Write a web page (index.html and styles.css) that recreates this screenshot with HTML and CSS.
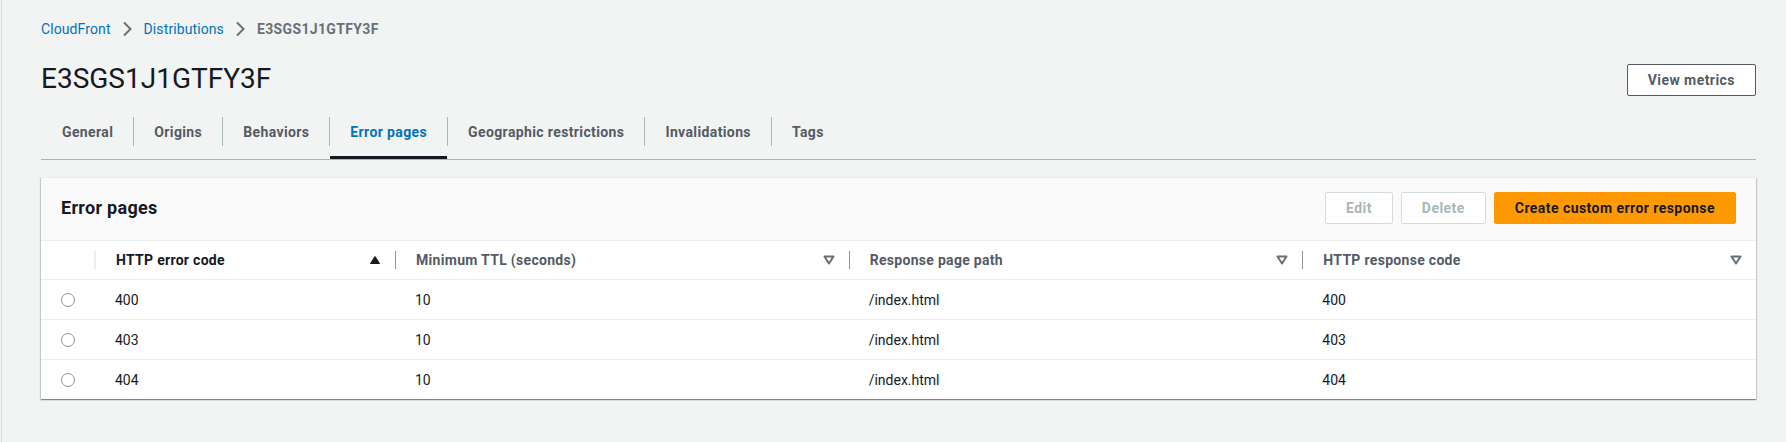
FILE: index.html
```html
<!DOCTYPE html>
<html lang="en">
<head>
<meta charset="utf-8">
<title>E3SGS1J1GTFY3F</title>
<link rel="stylesheet" href="styles.css">
</head>
<body>
<div class="layout">
  <nav class="breadcrumbs">
    <a class="crumb" href="#">CloudFront</a>
    <svg class="chev" viewBox="0 0 16 16" width="16" height="16"><path d="M5 1.5l6.5 6.5-6.5 6.5" fill="none" stroke="#687078" stroke-width="2"/></svg>
    <a class="crumb" href="#">Distributions</a>
    <svg class="chev" viewBox="0 0 16 16" width="16" height="16"><path d="M5 1.5l6.5 6.5-6.5 6.5" fill="none" stroke="#687078" stroke-width="2"/></svg>
    <span class="crumb current">E3SGS1J1GTFY3F</span>
  </nav>

  <header class="page-head">
    <h1 class="title">E3SGS1J1GTFY3F</h1>
    <button class="btn btn-normal">View metrics</button>
  </header>

  <div class="tabs">
    <div class="tab"><span class="tab-label">General</span></div>
    <div class="tab"><span class="tab-label sep">Origins</span></div>
    <div class="tab"><span class="tab-label sep">Behaviors</span></div>
    <div class="tab active"><span class="tab-label sep">Error pages</span></div>
    <div class="tab"><span class="tab-label sep">Geographic restrictions</span></div>
    <div class="tab"><span class="tab-label sep">Invalidations</span></div>
    <div class="tab"><span class="tab-label sep">Tags</span></div>
  </div>

  <section class="panel">
    <div class="panel-head">
      <h2 class="panel-title">Error pages</h2>
      <div class="actions">
        <button class="btn btn-disabled">Edit</button>
        <button class="btn btn-disabled">Delete</button>
        <button class="btn btn-primary">Create custom error response</button>
      </div>
    </div>
    <div class="grid">
      <div class="th th-select"><span class="th-inner light"></span></div>
      <div class="th sorted"><span class="th-inner"><span class="th-text">HTTP error code</span>
        <svg class="sort" viewBox="0 0 12 12" width="12" height="12"><path d="M1.5 9.5L6 2.5l4.5 7z" fill="#16191f" stroke="#16191f" stroke-width="1" stroke-linejoin="round"/></svg></span></div>
      <div class="th"><span class="th-inner dark"><span class="th-text">Minimum TTL (seconds)</span>
        <svg class="sort" viewBox="0 0 12 12" width="12" height="12"><path d="M1.5 2.5h9L6 9.5z" fill="none" stroke="#687078" stroke-width="2" stroke-linejoin="round"/></svg></span></div>
      <div class="th"><span class="th-inner dark"><span class="th-text">Response page path</span>
        <svg class="sort" viewBox="0 0 12 12" width="12" height="12"><path d="M1.5 2.5h9L6 9.5z" fill="none" stroke="#687078" stroke-width="2" stroke-linejoin="round"/></svg></span></div>
      <div class="th"><span class="th-inner dark"><span class="th-text">HTTP response code</span>
        <svg class="sort" viewBox="0 0 12 12" width="12" height="12"><path d="M1.5 2.5h9L6 9.5z" fill="none" stroke="#687078" stroke-width="2" stroke-linejoin="round"/></svg></span></div>

      <div class="td td-select"><span class="radio"></span></div>
      <div class="td">400</div>
      <div class="td">10</div>
      <div class="td">/index.html</div>
      <div class="td">400</div>

      <div class="td td-select line"><span class="radio"></span></div>
      <div class="td line">403</div>
      <div class="td line">10</div>
      <div class="td line">/index.html</div>
      <div class="td line">403</div>

      <div class="td td-select line"><span class="radio"></span></div>
      <div class="td line">404</div>
      <div class="td line">10</div>
      <div class="td line">/index.html</div>
      <div class="td line">404</div>
    </div>
  </section>
</div>
</body>
</html>
```

FILE: styles.css
```css
* { box-sizing: border-box; }

html, body {
  margin: 0;
  padding: 0;
  background: #f2f3f3;
  font-family: Roboto, "Liberation Sans", sans-serif;
  font-size: 14px;
  color: #16191f;
}

.layout {
  margin-left: 1px;
  border-left: 1px solid #d5dbdb;
  min-height: 442px;
  padding: 18px 30px 0 39px;
}

/* breadcrumbs */
.breadcrumbs {
  display: flex;
  align-items: center;
  height: 20px;
  line-height: 20px;
  margin-top: 1px;
}
.crumb {
  color: #0073bb;
  text-decoration: none;
  letter-spacing: 0.1px;
}
.crumb.current {
  color: #687078;
  font-weight: 700;
  letter-spacing: 0.35px;
}
.chev {
  display: block;
  margin: 0 9px 0 8px;
}

/* page header */
.page-head {
  display: flex;
  align-items: center;
  justify-content: space-between;
  margin-top: 22px;
  height: 36px;
}
.title {
  margin: 0;
  font-size: 28px;
  line-height: 36px;
  font-weight: 400;
  color: #16191f;
}

/* buttons */
.btn {
  font-family: inherit;
  font-size: 14px;
  font-weight: 700;
  line-height: 22px;
  padding: 4px 20px;
  border-radius: 2px;
  border: 1px solid #545b64;
  background: #fff;
  color: #545b64;
  cursor: pointer;
  letter-spacing: 0.45px;
}
.btn-normal { margin-top: 1px; }
.btn-disabled {
  border-color: #d5dbdb;
  color: #aab7b8;
  cursor: default;
}
.btn-primary {
  background: #ff9900;
  border-color: #ff9900;
  color: #16191f;
}

/* tabs */
.tabs {
  display: flex;
  margin-top: 8px;
  border-bottom: 1px solid #aab7b8;
}
.tab {
  position: relative;
  padding: 12px 0 13px;
}
.tab-label {
  display: block;
  padding: 5px 20px 3px;
  line-height: 21px;
  font-weight: 700;
  letter-spacing: 0.38px;
  color: #545b64;
  border-left: 1px solid transparent;
}
.tab-label.sep { border-left-color: #aab7b8; }
.tab.active .tab-label { color: #0073bb; }
.tab.active::after {
  content: "";
  position: absolute;
  left: 1px;
  right: 0;
  bottom: 0;
  height: 3px;
  background: #16191f;
}

/* panel */
.panel {
  margin-top: 17px;
  background: #fff;
  border-top: 1px solid #eaeded;
  box-shadow: 0 1px 1px 0 rgba(0, 28, 36, 0.3), 1px 1px 1px 0 rgba(0, 28, 36, 0.15), -1px 1px 1px 0 rgba(0, 28, 36, 0.15);
}
.panel-head {
  display: flex;
  align-items: center;
  justify-content: space-between;
  background: #fafafa;
  padding: 14px 20px 16px;
  border-bottom: 1px solid #eaeded;
}
.panel-title {
  margin: 0;
  font-size: 18px;
  line-height: 32px;
  font-weight: 700;
  letter-spacing: 0.3px;
  color: #16191f;
}
.actions {
  display: flex;
  gap: 8px;
}

/* table */
.grid {
  display: grid;
  grid-template-columns: 54px 300px 1fr 1fr 1fr;
}
.th {
  height: 39px;
  display: flex;
  align-items: center;
  border-bottom: 1px solid #eaeded;
  font-weight: 700;
  letter-spacing: 0.3px;
  color: #545b64;
}
.th.sorted { color: #16191f; }
.th-inner {
  flex: 1;
  display: flex;
  align-items: center;
  justify-content: space-between;
  height: 18px;
  padding: 0 14px 0 20px;
  border-left: 1px solid #eaeded;
}
.th-inner.dark { border-left-color: #879596; }
.th-select {
  justify-content: flex-end;
}
.th-select .th-inner {
  flex: 0 0 1px;
  padding: 0;
  border-left: 0;
  background: #eaeded;
}
.th-text { line-height: 18px; }
.sort { display: block; }

.td {
  height: 39px;
  display: flex;
  align-items: center;
  padding-left: 20px;
  color: #16191f;
}
.td.line {
  height: 40px;
  border-top: 1px solid #eaeded;
}
.td-select {
  padding-left: 0;
  justify-content: center;
}
.radio {
  display: block;
  width: 14px;
  height: 14px;
  border-radius: 50%;
  border: 1px solid #879596;
  background: #fff;
}
```
